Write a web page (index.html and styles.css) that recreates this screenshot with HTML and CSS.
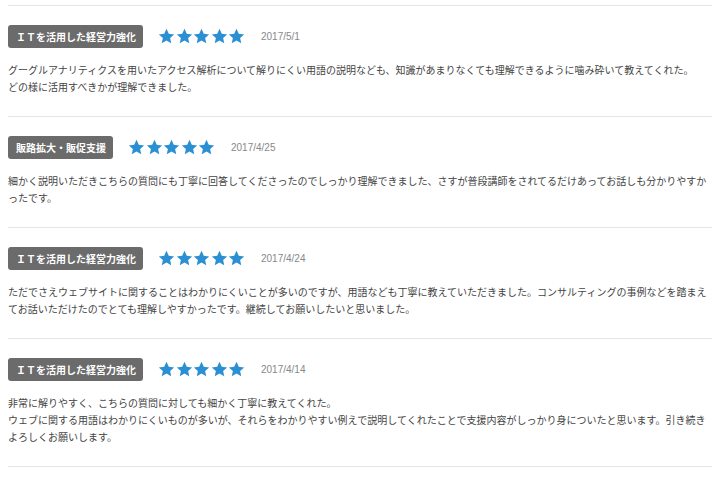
FILE: index.html
```html
<!DOCTYPE html>
<html lang="ja">
<head>
<meta charset="utf-8">
<link rel="stylesheet" href="styles.css">
</head>
<body>
<svg width="0" height="0" class="defs">
  <defs>
    <symbol id="star" viewBox="0 0 24 24">
      <polygon points="12,1.2 15.2,8.2 22.8,9 17.1,14.1 18.7,21.6 12,17.8 5.3,21.6 6.9,14.1 1.2,9 8.8,8.2"/>
    </symbol>
  </defs>
</svg>
<div class="reviews">
  <div class="review">
    <div class="head">
      <span class="tag">ＩＴを活用した経営力強化</span>
      <span class="stars"><svg><use href="#star"/></svg><svg><use href="#star"/></svg><svg><use href="#star"/></svg><svg><use href="#star"/></svg><svg><use href="#star"/></svg></span>
      <span class="date">2017/5/1</span>
    </div>
    <p class="text">グーグルアナリティクスを用いたアクセス解析について解りにくい用語の説明なども、知識があまりなくても理解できるように噛み砕いて教えてくれた。<br>どの様に活用すべきかが理解できました。</p>
  </div>
  <div class="review">
    <div class="head">
      <span class="tag">販路拡大・販促支援</span>
      <span class="stars"><svg><use href="#star"/></svg><svg><use href="#star"/></svg><svg><use href="#star"/></svg><svg><use href="#star"/></svg><svg><use href="#star"/></svg></span>
      <span class="date">2017/4/25</span>
    </div>
    <p class="text">細かく説明いただきこちらの質問にも丁寧に回答してくださったのでしっかり理解できました、さすが普段講師をされてるだけあってお話しも分かりやすかったです。</p>
  </div>
  <div class="review">
    <div class="head">
      <span class="tag">ＩＴを活用した経営力強化</span>
      <span class="stars"><svg><use href="#star"/></svg><svg><use href="#star"/></svg><svg><use href="#star"/></svg><svg><use href="#star"/></svg><svg><use href="#star"/></svg></span>
      <span class="date">2017/4/24</span>
    </div>
    <p class="text">ただでさえウェブサイトに関することはわかりにくいことが多いのですが、用語なども丁寧に教えていただきました。コンサルティングの事例などを踏まえてお話いただけたのでとても理解しやすかったです。継続してお願いしたいと思いました。</p>
  </div>
  <div class="review">
    <div class="head">
      <span class="tag">ＩＴを活用した経営力強化</span>
      <span class="stars"><svg><use href="#star"/></svg><svg><use href="#star"/></svg><svg><use href="#star"/></svg><svg><use href="#star"/></svg><svg><use href="#star"/></svg></span>
      <span class="date">2017/4/14</span>
    </div>
    <p class="text">非常に解りやすく、こちらの質問に対しても細かく丁寧に教えてくれた。<br>ウェブに関する用語はわかりにくいものが多いが、それらをわかりやすい例えで説明してくれたことで支援内容がしっかり身についたと思います。引き続きよろしくお願いします。</p>
  </div>
</div>
</body>
</html>
```

FILE: styles.css
```css
html, body {
  margin: 0;
  padding: 0;
  background: #fff;
}
body {
  padding: 5px 16px 0 8px;
  font-family: "Noto Sans CJK JP", "Liberation Sans", sans-serif;
}
.defs {
  position: absolute;
  width: 0;
  height: 0;
}
.reviews {
  border-bottom: 1px solid #e6e6e6;
}
.review {
  border-top: 1px solid #e6e6e6;
  padding: 19px 0 21px;
}
.head {
  display: flex;
  align-items: center;
  height: 23px;
}
.tag {
  display: inline-flex;
  align-items: center;
  height: 23px;
  padding: 0 7px 0 8px;
  background: #6b6b6b;
  color: #fff;
  border-radius: 3px;
  font-size: 10px;
  font-weight: bold;
  font-family: "Noto Sans CJK JP", sans-serif;
}
.stars {
  display: flex;
  gap: 0.5px;
  margin-left: 15px;
  fill: #2b8fd3;
}
.stars svg {
  width: 17px;
  height: 17px;
}
.date {
  margin-left: 16px;
  color: #888;
  font-size: 10px;
  font-family: "Liberation Sans", Arial, sans-serif;
}
.text {
  margin: 13px 0 0;
  font-size: 10px;
  line-height: 17px;
  color: #444;
}
```
